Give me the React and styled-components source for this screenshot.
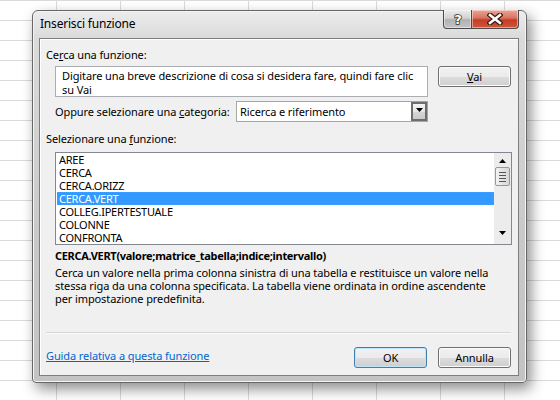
import React from 'react';
import styled, { createGlobalStyle } from 'styled-components';

const Global = createGlobalStyle`
  html, body { margin: 0; padding: 0; }
  body {
    width: 560px; height: 400px; overflow: hidden;
    font-family: "Noto Sans", "Open Sans", sans-serif;
    font-size: 11px; letter-spacing: -0.1px; color: #000;
  }
`;

const Desktop = styled.div`
  width: 560px; height: 400px; box-sizing: border-box;
  padding: 10px 0 0 32px;
  background-color: #fff;
  background-image:
    linear-gradient(#dadada 1px, transparent 1px),
    linear-gradient(90deg, #dadada 1px, transparent 1px);
  background-size: 64px 20px;
  background-position: 56px 0, 56px 0;
`;

const Window = styled.div`
  width: 495px; height: 373px; box-sizing: border-box;
  border: 1px solid #666;
  border-radius: 6px 6px 4px 4px;
  background: linear-gradient(#ececec, #dadada 28px, #c9c9c9 60%, #c3c3c3);
  box-shadow: inset 0 0 0 1px #f4f4f4, 4px 6px 14px rgba(0,0,0,0.45);
  display: flex; flex-direction: column;
  padding: 0 7px 6px 6px;
`;

const TitleBar = styled.div`
  height: 27px; flex: none;
  display: flex; align-items: flex-start;
`;

const Title = styled.div`
  padding: 5px 0 0 1px;
  font-size: 12px; letter-spacing: -0.2px; line-height: 15px; color: #000;
`;

const CaptionButtons = styled.div`
  margin-left: auto; margin-top: -1px;
  display: flex;
`;

const CapBtn = styled.div`
  height: 19px; box-sizing: border-box;
  border: 1px solid #4a4a4a; border-top: none;
  display: flex; align-items: center; justify-content: center;
  width: ${p => p.$w}px;
  background: ${p => p.$red
    ? 'linear-gradient(#e9a796, #d9735e 45%, #c63d25 55%, #d0553c)'
    : 'linear-gradient(#ececec, #d2d2d2 45%, #b1b1b1 55%, #c4c4c4)'};
  border-radius: ${p => p.$red ? '0 0 4px 0' : '0 0 0 4px'};
  ${p => p.$red ? 'border-left: none;' : ''}
  box-shadow: inset 0 0 0 1px rgba(255,255,255,0.45);
`;

const Panel = styled.div`
  flex: 1;
  border: 1px solid #7e7e7e;
  background: #f0f0f0;
  box-shadow: inset 1px 1px 0 #fff;
  display: flex; flex-direction: column;
  padding: 8px 7px 0 6px;
`;

const Label = styled.div`
  line-height: 15px; white-space: nowrap;
  margin-top: ${p => p.$mt || 0}px;
  margin-left: ${p => p.$ml || 0}px;
  width: ${p => p.$w ? p.$w + 'px' : 'auto'};
  flex: none;
`;

const U = styled.span`
  text-decoration: underline;
`;

const Row = styled.div`
  display: flex; align-items: ${p => p.$align || 'center'};
  margin-top: ${p => p.$mt || 0}px;
  margin-left: ${p => p.$ml || 0}px;
`;

const SearchBox = styled.div`
  width: 373px; height: 31px; box-sizing: border-box;
  border: 1px solid #abadb3;
  background: #fff;
  padding: 2px 6px;
  line-height: 14px; white-space: nowrap; overflow: hidden;
`;

const Button = styled.div`
  width: 73px; height: ${p => p.$h || 21}px; box-sizing: border-box;
  border: 1px solid ${p => p.$default ? '#3c7fb1' : '#707070'};
  border-radius: 3px;
  background: linear-gradient(#f2f2f2, #ebebeb 50%, #dddddd 50%, #cfcfcf);
  box-shadow: inset 0 0 0 1px ${p => p.$default ? '#bde6fd' : '#fcfcfc'};
  display: flex; align-items: center; justify-content: center;
  margin-left: ${p => p.$ml || 0}px;
  line-height: 15px;
`;

const Select = styled.div`
  width: 192px; height: 21px; box-sizing: border-box;
  border: 1px solid #a5a5a5;
  background: #fff;
  display: flex; align-items: center;
  padding-left: 3px;
  position: relative;
`;

const SelectArrow = styled.div`
  position: absolute; right: 0; top: 0; bottom: 0;
  width: 16px; box-sizing: border-box;
  border: 2px solid #6d6d6d;
  background: linear-gradient(#f4f4f4, #e6e6e6 50%, #d6d6d6 50%, #cacaca);
  display: flex; justify-content: center; padding-top: 4px;
`;

const ListBox = styled.div`
  margin: 6px 0 0 9px;
  width: 457px; height: 93px; box-sizing: border-box;
  border: 1px solid #828790;
  background: #fff;
  display: flex;
`;

const Items = styled.div`
  flex: 1; padding: 0 0 0 1px;
  display: flex; flex-direction: column;
`;

const Item = styled.div`
  height: 13px; line-height: 13px; box-sizing: border-box;
  padding-left: 2px; font-size: 11px; letter-spacing: -0.25px; white-space: nowrap;
  ${p => p.$sel ? `
    background: #3399ff; color: #fff;
    outline: 1px dotted #d08030; outline-offset: -1px;
  ` : ''}
`;

const ScrollBar = styled.div`
  width: 17px; flex: none;
  background: #ececec;
  display: flex; flex-direction: column; align-items: center;
  padding-top: 6px;
`;

const Thumb = styled.div`
  margin-top: 4px;
  width: 15px; height: 19px; box-sizing: border-box;
  border: 1px solid #989898; border-radius: 2px;
  background: linear-gradient(90deg, #f3f3f3, #e4e4e4 50%, #d7d7d7);
  display: flex; flex-direction: column; align-items: center; justify-content: center; gap: 2px;
`;

const Grip = styled.div`
  width: 7px; height: 1px; background: #555;
`;

const Signature = styled.div`
  margin: 3px 0 0 9px;
  font-weight: bold; letter-spacing: -0.3px; line-height: 15px; white-space: nowrap;
`;

const Description = styled.div`
  margin: 3px 0 0 9px;
  line-height: 13px; white-space: nowrap;
`;

const Separator = styled.div`
  margin-top: 27px; height: 1px; background: #d5d5d5;
  box-shadow: 0 1px 0 #fbfbfb;
`;

const Link = styled.a`
  color: #0066cc; text-decoration: underline; line-height: 15px;
  margin-top: 0.5px;
`;

const Spacer = styled.div` flex: 1; `;

const Tri = ({ up, size = 7 }) => (
  <svg width={size} height={4} viewBox="0 0 7 4">
    <path d={up ? 'M0 4 L3.5 0 L7 4 Z' : 'M0 0 L7 0 L3.5 4 Z'} fill="#000" />
  </svg>
);

const items = ['AREE', 'CERCA', 'CERCA.ORIZZ', 'CERCA.VERT', 'COLLEG.IPERTESTUALE', 'COLONNE', 'CONFRONTA'];

export default function App() {
  return (
    <>
      <Global />
      <Desktop>
        <Window>
          <TitleBar>
            <Title>Inserisci funzione</Title>
            <CaptionButtons>
              <CapBtn $w={29}>
                <svg width="12" height="14" viewBox="0 0 12 14">
                  <text x="6" y="12" textAnchor="middle" fontFamily="DejaVu Sans, sans-serif" fontWeight="bold" fontSize="13" fill="#fff" stroke="#333" strokeWidth="1.6" paintOrder="stroke">?</text>
                </svg>
              </CapBtn>
              <CapBtn $w={47} $red>
                <svg width="16" height="12" viewBox="0 0 16 12">
                  <path d="M3 2 L13 10 M13 2 L3 10" stroke="#3a1a14" strokeWidth="5" strokeLinecap="square" />
                  <path d="M3 2 L13 10 M13 2 L3 10" stroke="#fff" strokeWidth="2.6" strokeLinecap="square" />
                </svg>
              </CapBtn>
            </CaptionButtons>
          </TitleBar>
          <Panel>
            <Label>Ce<U>r</U>ca una funzione:</Label>
            <Row $mt={4} $ml={9} $align="flex-start">
              <SearchBox>
                Digitare una breve descrizione di cosa si desidera fare, quindi fare clic<br />su Vai
              </SearchBox>
              <Button $ml={10}><span><U>V</U>ai</span></Button>
            </Row>
            <Row $mt={4} $ml={9}>
              <Label $w={181}>Oppure selezionare una <U>c</U>ategoria:</Label>
              <Select>
                Ricerca e riferimento
                <SelectArrow><Tri /></SelectArrow>
              </Select>
            </Row>
            <Label $mt={9}>Selezionare una <U>f</U>unzione:</Label>
            <ListBox>
              <Items>
                {items.map(it => <Item key={it} $sel={it === 'CERCA.VERT'}>{it}</Item>)}
              </Items>
              <ScrollBar>
                <Tri up />
                <Thumb><Grip /><Grip /><Grip /><Grip /></Thumb>
                <Spacer />
                <div style={{ marginBottom: 6 }}><Tri /></div>
              </ScrollBar>
            </ListBox>
            <Signature>CERCA.VERT(valore;matrice_tabella;indice;intervallo)</Signature>
            <Description>
              Cerca un valore nella prima colonna sinistra di una tabella e restituisce un valore nella<br />
              stessa riga da una colonna specificata. La tabella viene ordinata in ordine ascendente<br />
              per impostazione predefinita.
            </Description>
            <Separator />
            <Row $mt={14} $align="flex-start">
              <Link href="#">Guida relativa a questa funzione</Link>
              <Spacer />
              <Button $default $h={21}>OK</Button>
              <Button $ml={11} $h={21}>Annulla</Button>
            </Row>
          </Panel>
        </Window>
      </Desktop>
    </>
  );
}
